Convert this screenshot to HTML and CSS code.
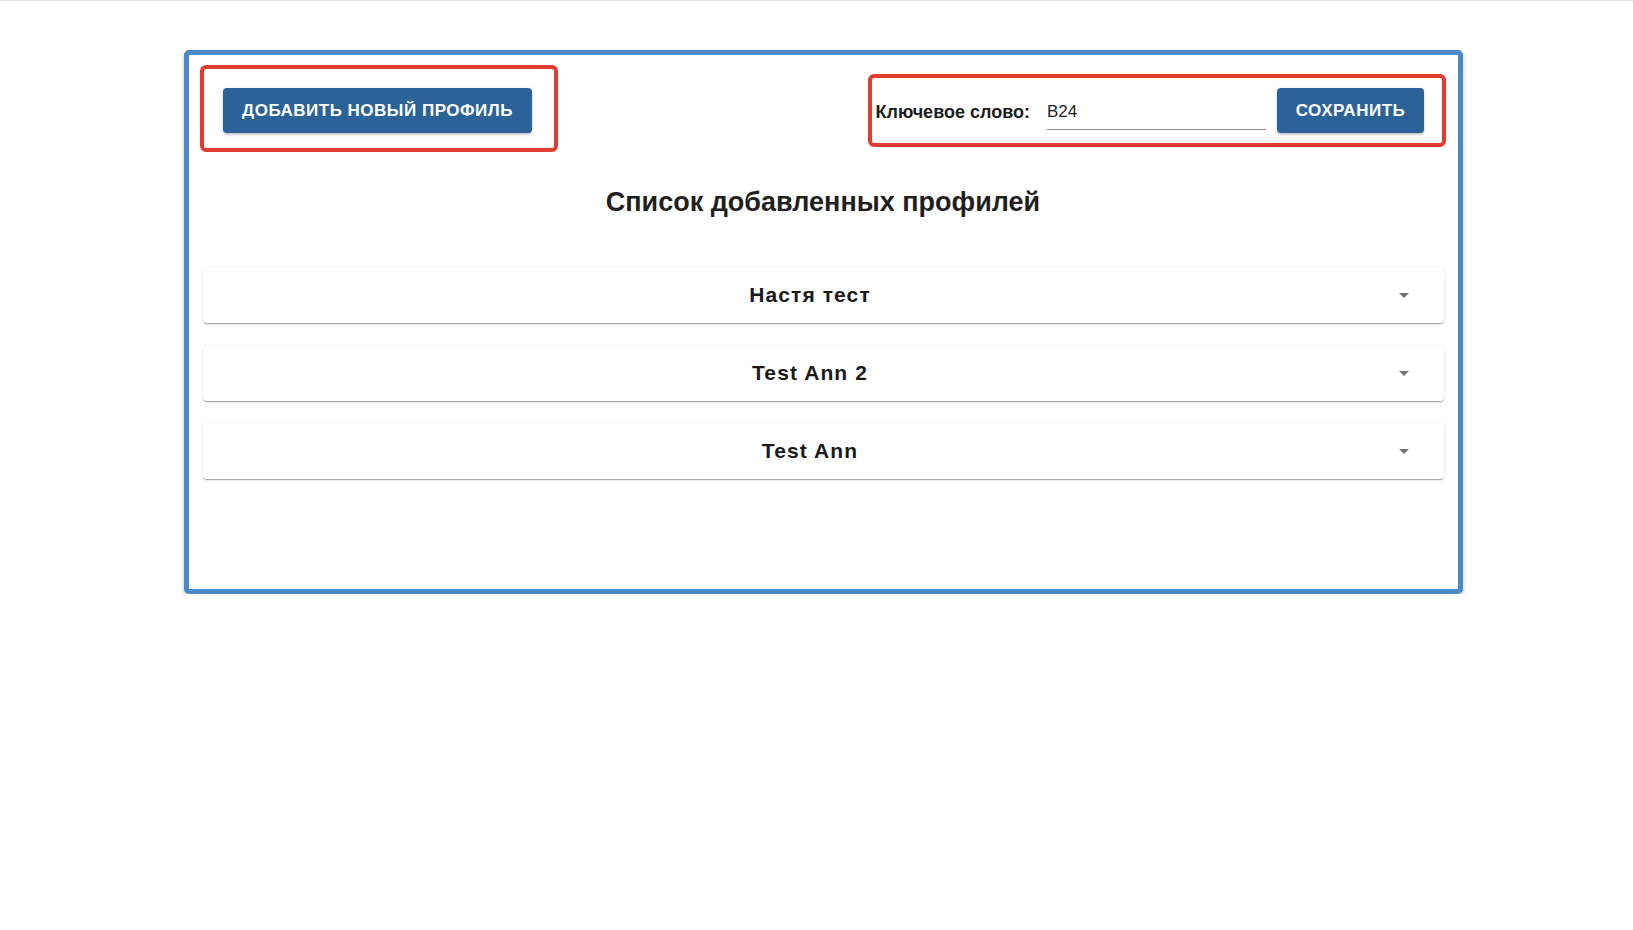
FILE: index.html
```html
<!DOCTYPE html>
<html lang="ru">
<head>
<meta charset="utf-8">
<title>Профили</title>
<link rel="stylesheet" href="styles.css">
</head>
<body>
<div class="frame">
  <div class="toolbar">
    <div class="mark mark-left">
      <button class="btn btn-add">Добавить новый профиль</button>
    </div>
    <div class="mark mark-right">
      <span class="kw-label">Ключевое слово:</span>
      <div class="kw-input"><span class="kw-value">B24</span></div>
      <button class="btn btn-save">Сохранить</button>
    </div>
  </div>
  <h2 class="title">Список добавленных профилей</h2>
  <div class="list">
    <div class="card">
      <div class="card-name">Настя тест</div>
      <svg class="card-arrow" viewBox="0 0 24 24" width="24" height="24"><path d="M7 10l5 5 5-5z"/></svg>
    </div>
    <div class="card">
      <div class="card-name">Test Ann 2</div>
      <svg class="card-arrow" viewBox="0 0 24 24" width="24" height="24"><path d="M7 10l5 5 5-5z"/></svg>
    </div>
    <div class="card">
      <div class="card-name">Test Ann</div>
      <svg class="card-arrow" viewBox="0 0 24 24" width="24" height="24"><path d="M7 10l5 5 5-5z"/></svg>
    </div>
  </div>
</div>
</body>
</html>
```

FILE: styles.css
```css
html, body {
  margin: 0;
  padding: 0;
  background: #ffffff;
}
body {
  border-top: 1px solid #e2e2e2;
  font-family: "Liberation Sans", Arial, sans-serif;
  color: #1f1f1f;
}
.frame {
  box-sizing: border-box;
  width: 1279px;
  height: 544px;
  margin: 49px 0 0 184px;
  border: 5px solid #4a8ac9;
  border-radius: 5px;
  box-shadow: 0 2px 4px rgba(0, 0, 0, 0.25);
  padding: 10px 12px 0 11px;
}
.toolbar {
  display: flex;
  justify-content: space-between;
  align-items: flex-start;
}
.mark {
  border: 4px solid #e33b30;
  border-radius: 6px;
  box-sizing: border-box;
}
.mark-left {
  padding: 19px 22px 15px 19px;
}
.mark-right {
  display: flex;
  align-items: center;
  padding: 10px 18px 10px 4px;
  margin-top: 9px;
}
.btn {
  display: block;
  border: 0;
  border-radius: 4px;
  background: #2b6399;
  color: #ffffff;
  font-family: "Liberation Sans", Arial, sans-serif;
  font-weight: 700;
  font-size: 17px;
  letter-spacing: 0.5px;
  text-transform: uppercase;
  height: 45px;
  padding: 0 19px;
  box-shadow: 0 2px 2px rgba(0, 0, 0, 0.14), 0 1px 4px rgba(0, 0, 0, 0.12);
}
.btn-add {
  width: 309px;
}
.btn-save {
  width: 147px;
  padding: 0;
}
.kw-label {
  font-size: 18px;
  font-weight: 700;
  color: #1c1c1c;
  margin-right: 17px;
  margin-top: 4px;
  white-space: nowrap;
}
.kw-input {
  width: 219px;
  height: 32px;
  box-sizing: border-box;
  border-bottom: 1px solid #8a8a8a;
  font-size: 17px;
  color: #222;
  display: flex;
  align-items: center;
  padding-bottom: 3px;
  margin-right: 11px;
  margin-top: 7px;
}
.title {
  margin: 35px 0 0;
  text-align: center;
  font-size: 27px;
  line-height: 31px;
  font-weight: 700;
  color: #1f1f1f;
}
.list {
  margin: 49px 2px 0 3px;
  display: flex;
  flex-direction: column;
  gap: 22px;
}
.card {
  height: 56px;
  display: flex;
  align-items: center;
  padding: 0 28px 0 25px;
  background: #fff;
  border-radius: 4px;
  box-shadow: 0 2px 1px -1px rgba(0, 0, 0, 0.2), 0 1px 1px 0 rgba(0, 0, 0, 0.14), 0 1px 3px 0 rgba(0, 0, 0, 0.12);
}
.card-name {
  flex: 1;
  text-align: center;
  font-size: 21px;
  font-weight: 700;
  letter-spacing: 1.1px;
  color: #1a1a1a;
}
.card-arrow {
  width: 24px;
  height: 24px;
  fill: #707070;
}
```
